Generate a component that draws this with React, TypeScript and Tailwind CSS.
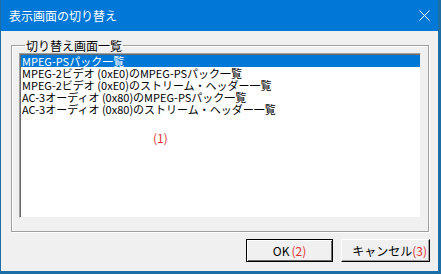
import React from "react";

const items = [
  "MPEG-PSパック一覧",
  "MPEG-2ビデオ (0xE0)のMPEG-PSパック一覧",
  "MPEG-2ビデオ (0xE0)のストリーム・ヘッダー一覧",
  "AC-3オーディオ (0x80)のMPEG-PSパック一覧",
  "AC-3オーディオ (0x80)のストリーム・ヘッダー一覧",
];

const font = { fontFamily: '"Noto Sans CJK JP", "Liberation Sans", sans-serif' };

const App = () => {
  return (
    <div
      className="w-[441px] h-[274px] flex flex-col bg-[#f0f0f0] border-l border-r-[3px] border-b-[3px] border-[#1c6ea4] text-[12px] text-black"
      style={font}
    >
      {/* title bar */}
      <div className="h-[31px] shrink-0 bg-[#0078d7] flex items-center justify-between pl-[8px] pr-[8px] text-white">
        <span className="text-[12px] leading-none">表示画面の切り替え</span>
        <svg width="11" height="11" viewBox="0 0 11 11">
          <path d="M0.5 0.5 L10.5 10.5 M10.5 0.5 L0.5 10.5" stroke="#fff" strokeWidth="1" />
        </svg>
      </div>

      <div className="flex flex-col pl-[10px] pr-[9px] pt-[8px]">
        <fieldset className="border border-[#a0a0a0] shadow-[inset_1px_1px_0_#fff,1px_1px_0_#fff] h-[193px] px-[7px] pb-[11px]">
          <legend className="ml-[6px] px-[1px] leading-[13px]">切り替え画面一覧</legend>
          <div className="relative mt-[1px] h-[165px] bg-white border-t border-l border-[#a0a0a0] border-r border-b border-r-[#f0f0f0] border-b-[#f0f0f0] shadow-[inset_1px_1px_0_#696969] pt-[1px] pl-[1px] text-[11px]">
            {items.map((item, i) => (
              <div
                key={item}
                className={`h-[12px] leading-[12px] pl-[1px] whitespace-nowrap ${
                  i === 0 ? "bg-[#0078d7] text-white" : ""
                }`}
              >
                {item}
              </div>
            ))}
            <span className="absolute left-[133px] top-[75px] text-[12px] text-[#e03131]">(1)</span>
          </div>
        </fieldset>

        <div className="flex justify-end gap-[8px] mt-[7px] -mr-[1px]">
          <button className="w-[87px] h-[23px] flex items-center justify-center border border-[#000] bg-[#f0f0f0] shadow-[inset_1px_1px_0_#fff,inset_-1px_-1px_0_#696969]">
            <span>OK</span>
            <span className="text-[#e03131] ml-[2px]">(2)</span>
          </button>
          <button className="w-[89px] h-[23px] flex items-center justify-end pr-[2px] border border-t-white border-l-white border-r-[#000] border-b-[#000] bg-[#f0f0f0] shadow-[inset_-1px_-1px_0_#a0a0a0]">
            <span>キャンセル</span>
            <span className="text-[#e03131]">(3)</span>
          </button>
        </div>
      </div>
    </div>
  );
};

export default App;
